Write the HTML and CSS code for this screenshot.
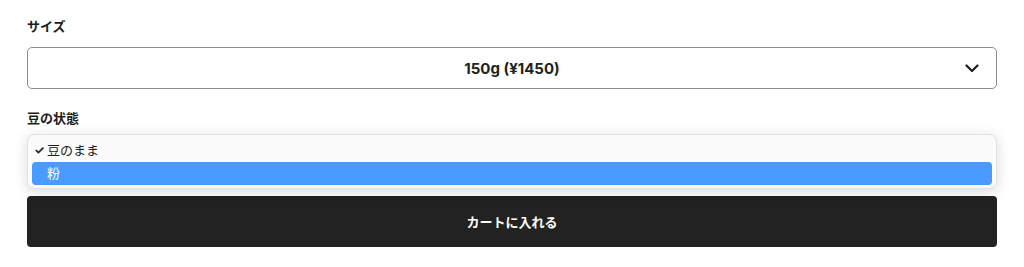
FILE: index.html
```html
<!DOCTYPE html>
<html lang="ja">
<head>
    <meta charset="UTF-8">
    <meta name="viewport" content="width=device-width, initial-scale=1.0">
    <title>商品オプション</title>
    <link rel="stylesheet" href="styles.css">
</head>
<body>
    <form class="product-form">
        <div class="field">
            <label class="field-label" for="size">サイズ</label>
            <div class="select-box" id="size">
                <span class="select-value">150g (¥1450)</span>
                <svg class="chevron" width="14" height="9" viewBox="0 0 14 9">
                    <path d="M1.5 1.5 L7 7 L12.5 1.5" fill="none" stroke="#1c1c1c" stroke-width="2.2" stroke-linecap="round" stroke-linejoin="round"/>
                </svg>
            </div>
        </div>
        <div class="field">
            <label class="field-label" for="grind">豆の状態</label>
            <div class="select-wrap">
                <div class="select-box" id="grind">
                    <span class="select-value ghost">豆のまま</span>
                </div>
                <ul class="dropdown">
                    <li class="option"><span class="check">✓</span>豆のまま</li>
                    <li class="option selected">粉</li>
                </ul>
            </div>
        </div>
        <button type="button" class="cart-button">カートに入れる</button>
    </form>
</body>
</html>
```

FILE: styles.css
```css
body {
    margin: 0;
    padding: 16px 27px 0;
    background-color: #fff;
    font-family: Inter, "Noto Sans CJK JP", sans-serif;
    color: #1c1c1c;
}
.product-form {
    width: 970px;
}
.field {
    margin-bottom: 19px;
}
.field-label {
    display: block;
    font-size: 13px;
    font-weight: 700;
    line-height: 20px;
    margin-bottom: 11px;
}
.select-box {
    position: relative;
    display: flex;
    justify-content: center;
    align-items: center;
    height: 40px;
    border: 1px solid #8d8d8d;
    border-radius: 5px;
    background-color: #fff;
}
.select-value {
    font-size: 15px;
    font-weight: 700;
    color: #222;
}
.select-value.ghost {
    color: #f0f0f0;
}
.chevron {
    position: absolute;
    right: 17px;
    top: 16px;
}
.select-wrap {
    position: relative;
}
.dropdown {
    position: absolute;
    top: -5px;
    left: 0;
    right: 0;
    margin: 0;
    padding: 4px 4px 3px;
    list-style: none;
    background-color: #fbfbfb;
    border: 1px solid #e2e2e2;
    border-radius: 8px;
    box-shadow: 0 3px 14px rgba(0, 0, 0, 0.15);
}
.option {
    height: 22px;
    line-height: 22px;
    padding-left: 15px;
    font-size: 13px;
    position: relative;
    border-radius: 4px;
    color: #222;
}
.option.selected {
    height: 23px;
    line-height: 23px;
    margin-top: 1px;
    background-color: #4a9bff;
    color: #fff;
}
.check {
    position: absolute;
    left: 2px;
    font-size: 12px;
    font-weight: 700;
}
.cart-button {
    display: block;
    width: 100%;
    height: 51px;
    margin-top: -4px;
    border: none;
    border-radius: 4px;
    background-color: #222;
    color: #fff;
    font-family: inherit;
    font-size: 13px;
    font-weight: 700;
}
```
